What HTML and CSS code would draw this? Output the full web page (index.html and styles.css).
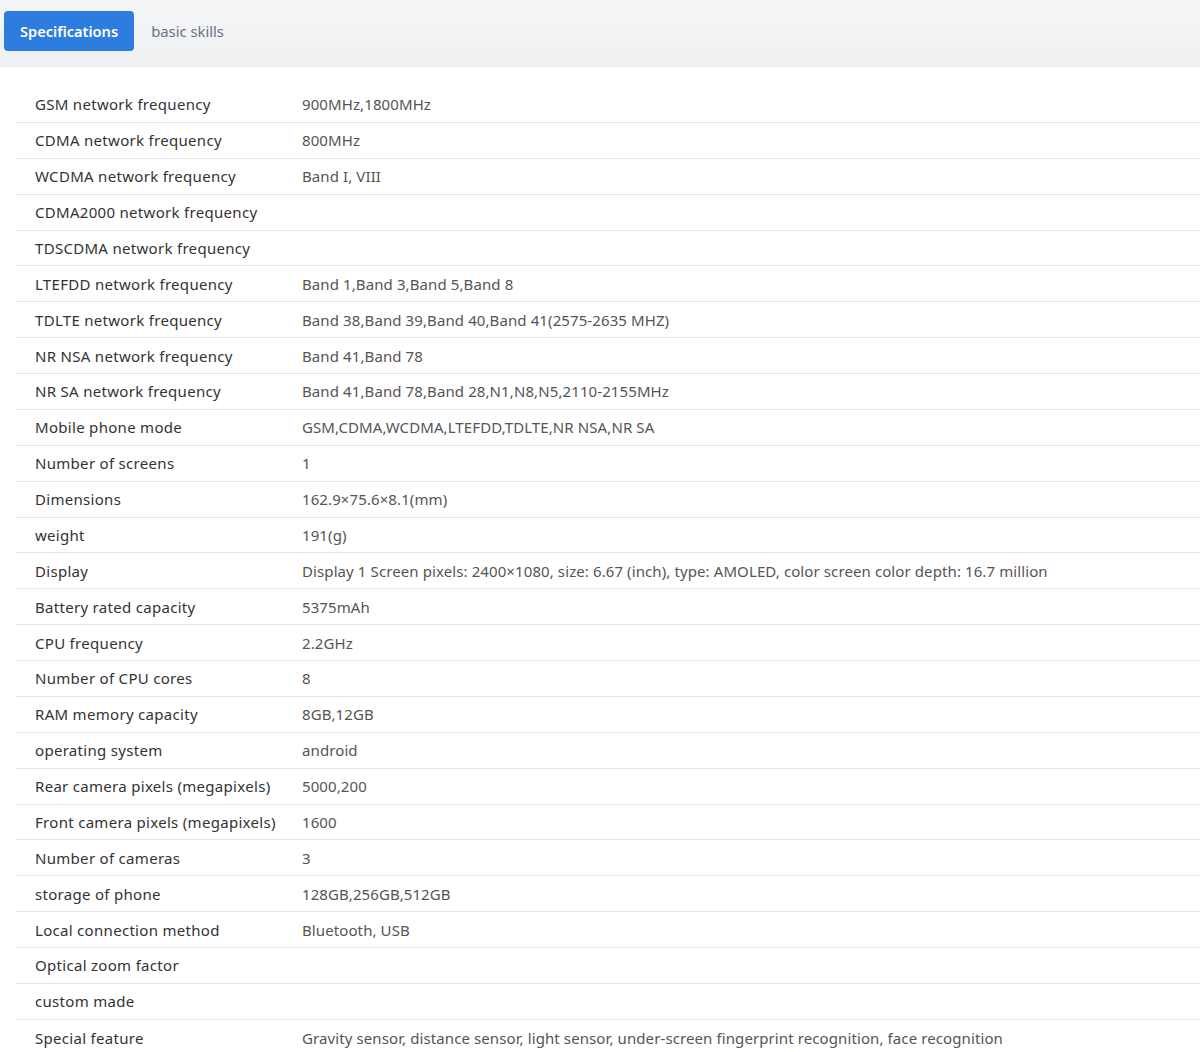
FILE: index.html
```html
<!DOCTYPE html>
<html>
<head>
<meta charset="utf-8">
<link rel="stylesheet" href="styles.css">
</head>
<body>
<div class="tabs">
  <button class="tab active">Specifications</button>
  <button class="tab">basic skills</button>
</div>
<div class="specs">
  <div class="row"><div class="k">GSM network frequency</div><div class="v">900MHz,1800MHz</div></div>
  <div class="row"><div class="k">CDMA network frequency</div><div class="v">800MHz</div></div>
  <div class="row"><div class="k">WCDMA network frequency</div><div class="v">Band I, VIII</div></div>
  <div class="row"><div class="k">CDMA2000 network frequency</div><div class="v"></div></div>
  <div class="row"><div class="k">TDSCDMA network frequency</div><div class="v"></div></div>
  <div class="row"><div class="k">LTEFDD network frequency</div><div class="v">Band 1,Band 3,Band 5,Band 8</div></div>
  <div class="row"><div class="k">TDLTE network frequency</div><div class="v">Band 38,Band 39,Band 40,Band 41(2575-2635 MHZ)</div></div>
  <div class="row"><div class="k">NR NSA network frequency</div><div class="v">Band 41,Band 78</div></div>
  <div class="row"><div class="k">NR SA network frequency</div><div class="v">Band 41,Band 78,Band 28,N1,N8,N5,2110-2155MHz</div></div>
  <div class="row"><div class="k">Mobile phone mode</div><div class="v">GSM,CDMA,WCDMA,LTEFDD,TDLTE,NR NSA,NR SA</div></div>
  <div class="row"><div class="k">Number of screens</div><div class="v">1</div></div>
  <div class="row"><div class="k">Dimensions</div><div class="v">162.9×75.6×8.1(mm)</div></div>
  <div class="row"><div class="k">weight</div><div class="v">191(g)</div></div>
  <div class="row"><div class="k">Display</div><div class="v">Display 1 Screen pixels: 2400×1080, size: 6.67 (inch), type: AMOLED, color screen color depth: 16.7 million</div></div>
  <div class="row"><div class="k">Battery rated capacity</div><div class="v">5375mAh</div></div>
  <div class="row"><div class="k">CPU frequency</div><div class="v">2.2GHz</div></div>
  <div class="row"><div class="k">Number of CPU cores</div><div class="v">8</div></div>
  <div class="row"><div class="k">RAM memory capacity</div><div class="v">8GB,12GB</div></div>
  <div class="row"><div class="k">operating system</div><div class="v">android</div></div>
  <div class="row"><div class="k">Rear camera pixels (megapixels)</div><div class="v">5000,200</div></div>
  <div class="row"><div class="k">Front camera pixels (megapixels)</div><div class="v">1600</div></div>
  <div class="row"><div class="k">Number of cameras</div><div class="v">3</div></div>
  <div class="row"><div class="k">storage of phone</div><div class="v">128GB,256GB,512GB</div></div>
  <div class="row"><div class="k">Local connection method</div><div class="v">Bluetooth, USB</div></div>
  <div class="row"><div class="k">Optical zoom factor</div><div class="v"></div></div>
  <div class="row"><div class="k">custom made</div><div class="v"></div></div>
  <div class="row"><div class="k">Special feature</div><div class="v">Gravity sensor, distance sensor, light sensor, under-screen fingerprint recognition, face recognition</div></div>
</div>
</body>
</html>
```

FILE: styles.css
```css
html, body {
  margin: 0;
  padding: 0;
  background: #ffffff;
  font-family: "Noto Sans", "Open Sans", sans-serif;
}

.tabs {
  height: 67px;
  box-sizing: border-box;
  padding: 11px 4px 0;
  display: flex;
  align-items: flex-start;
  gap: 1px;
  background: linear-gradient(#f5f6f8, #eff0f2);
  border-bottom: 1px solid #eceef0;
}

.tab {
  height: 40px;
  padding: 0 16px;
  border: none;
  border-radius: 4px;
  background: transparent;
  font-family: "Noto Sans", "Open Sans", sans-serif;
  font-size: 14.8px;
  color: #687384;
  cursor: pointer;
}

.tab.active {
  background: #2d7de0;
  color: #ffffff;
  font-weight: 600;
  font-size: 14.6px;
}

.specs {
  margin: 20px 0 0 15px;
}

.row {
  display: flex;
  align-items: center;
  height: 35.88px;
  box-sizing: border-box;
  border-bottom: 1px solid #e6e6e6;
  font-size: 15px;
}

.row:last-child {
  border-bottom: none;
}

.k {
  width: 287px;
  flex: none;
  padding-left: 20px;
  box-sizing: border-box;
  color: #333333;
  letter-spacing: 0.3px;
}

.v {
  color: #555555;
  letter-spacing: 0.1px;
}
```
